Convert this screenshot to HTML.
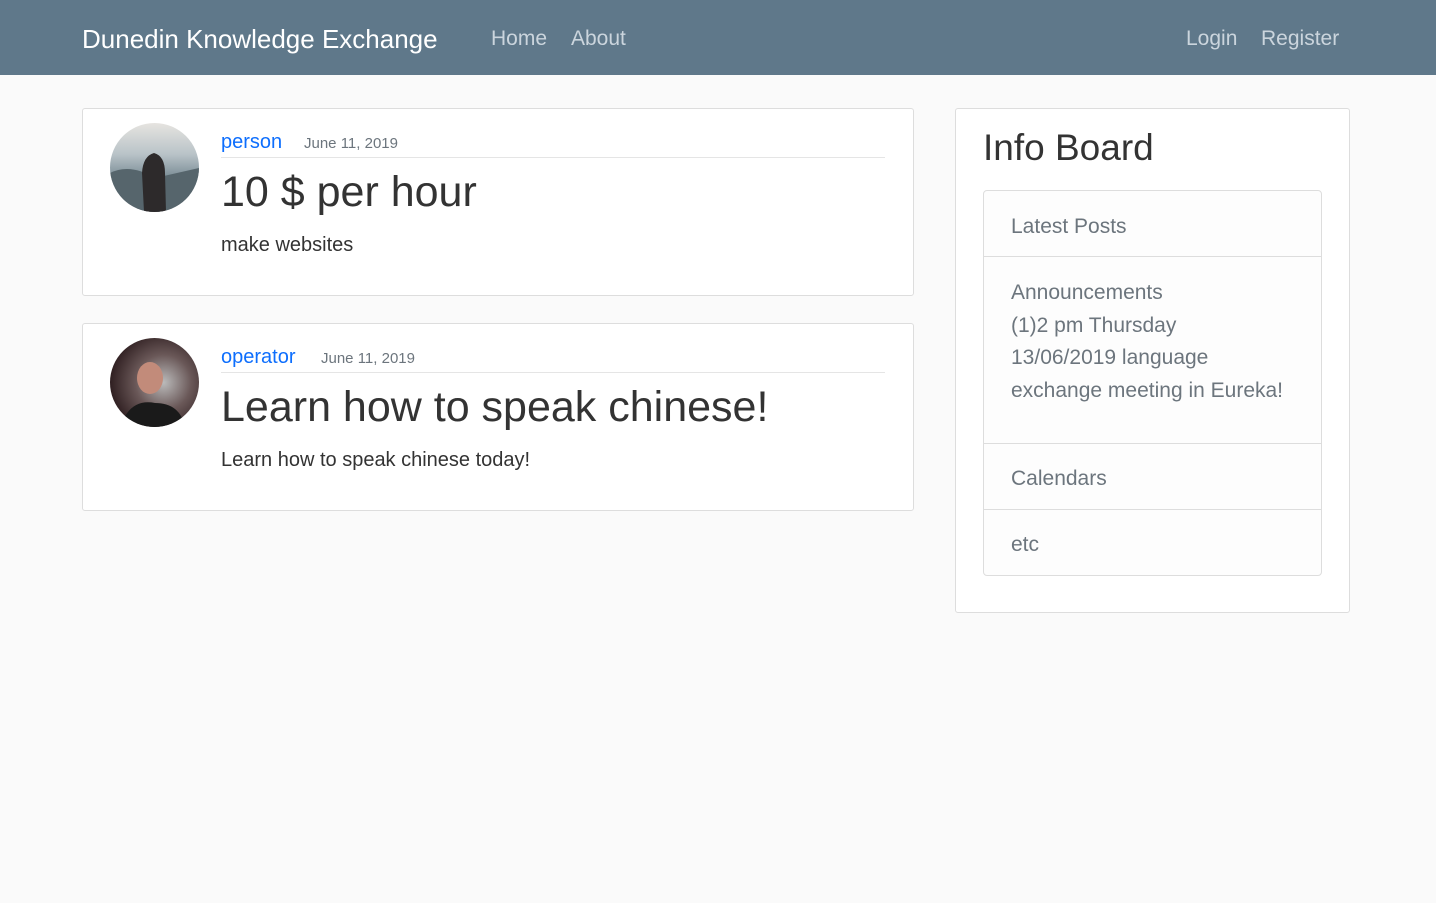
<!DOCTYPE html>
<html><head><meta charset="utf-8"><style>
*{box-sizing:border-box;margin:0;padding:0}
body{width:1436px;height:903px;background:#fafafa;font-family:"Liberation Sans",sans-serif;color:#444;position:relative;overflow:hidden}
.a{position:absolute;white-space:nowrap}
nav{position:absolute;left:0;top:0;width:1436px;height:75px;background:#5f788a}
.nl{color:#cbd5dd;font-size:21px;top:27px}
.card{position:absolute;background:#fff;border:1px solid #ddd;border-radius:3px}
.av{position:absolute;width:89px;height:89px;border-radius:50%;overflow:hidden}
.hr{position:absolute;height:1px;background:#e5e5e5}
</style></head><body>
<nav>
<div class="a" style="left:82px;top:24px;color:#fff;font-size:26px">Dunedin Knowledge Exchange</div>
<div class="a nl" style="left:491px">Home</div>
<div class="a nl" style="left:571px">About</div>
<div class="a nl" style="left:1186px">Login</div>
<div class="a nl" style="left:1261px">Register</div>
</nav>

<div class="card" style="left:82px;top:108px;width:832px;height:188px"></div>
<div class="av" style="left:110px;top:123px;background:linear-gradient(180deg,#e6e4e0 0%,#b9c3c8 35%,#7d8f98 60%,#4a5358 100%)">
<svg width="89" height="89"><path d="M0 50 Q20 40 45 55 L89 45 L89 89 L0 89Z" fill="#56656c"/><path d="M34 89 L32 50 Q33 33 44 30 Q55 33 55 50 L56 89Z" fill="#2d2a2b"/></svg></div>
<div class="a" style="left:221px;top:131px;color:#0d6efd;font-size:20px">person</div>
<div class="a" style="left:304px;top:135px;color:#6c757d;font-size:15px">June 11, 2019</div>
<div class="hr" style="left:221px;top:157px;width:664px"></div>
<div class="a" style="left:221px;top:168px;color:#333;font-size:43px">10 $ per hour</div>
<div class="a" style="left:221px;top:234px;color:#333;font-size:20px">make websites</div>

<div class="card" style="left:82px;top:323px;width:832px;height:188px"></div>
<div class="av" style="left:110px;top:338px;background:radial-gradient(circle at 60% 50%,#bbb 0%,#6a5858 40%,#2a1a1c 80%)">
<svg width="89" height="89"><ellipse cx="40" cy="40" rx="13" ry="16" fill="#c28b7a"/><path d="M10 89 Q20 60 45 65 Q70 65 75 89Z" fill="#1a1a1a"/></svg></div>
<div class="a" style="left:221px;top:346px;color:#0d6efd;font-size:20px">operator</div>
<div class="a" style="left:321px;top:350px;color:#6c757d;font-size:15px">June 11, 2019</div>
<div class="hr" style="left:221px;top:372px;width:664px"></div>
<div class="a" style="left:221px;top:383px;color:#333;font-size:43px">Learn how to speak chinese!</div>
<div class="a" style="left:221px;top:449px;color:#333;font-size:20px">Learn how to speak chinese today!</div>

<div class="card" style="left:955px;top:108px;width:395px;height:505px"></div>
<div class="a" style="left:983px;top:127px;color:#333;font-size:37px">Info Board</div>
<div class="card" style="left:983px;top:190px;width:339px;height:386px;background:#fdfdfd;border-radius:4px"></div>
<div class="hr" style="left:984px;top:256px;width:337px;background:#ddd"></div>
<div class="hr" style="left:984px;top:443px;width:337px;background:#ddd"></div>
<div class="hr" style="left:984px;top:509px;width:337px;background:#ddd"></div>
<div class="a" style="left:1011px;top:215px;color:#6c757d;font-size:21px">Latest Posts</div>
<div class="a" style="left:1011px;top:277px;color:#6c757d;font-size:21px;line-height:32.5px;white-space:normal;width:310px">Announcements<br>(1)2 pm Thursday<br>13/06/2019 language<br>exchange meeting in Eureka!</div>
<div class="a" style="left:1011px;top:467px;color:#6c757d;font-size:21px">Calendars</div>
<div class="a" style="left:1011px;top:533px;color:#6c757d;font-size:21px">etc</div>
</body></html>
